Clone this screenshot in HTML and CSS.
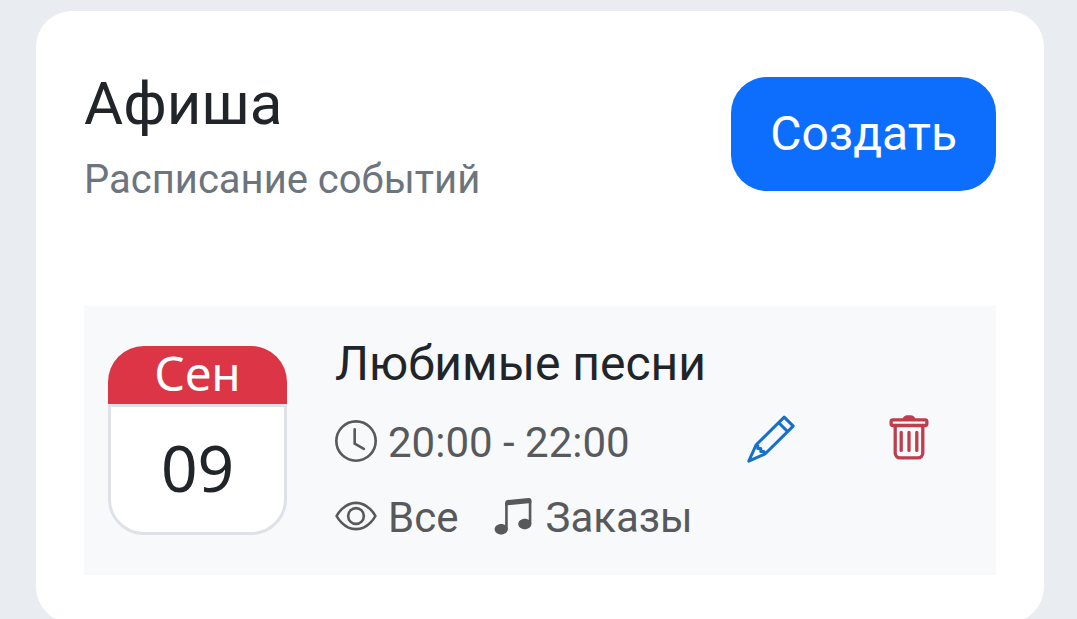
FILE: index.html
```html
<!DOCTYPE html>
<html lang="ru">
<head>
<meta charset="utf-8">
<meta name="viewport" content="width=device-width, initial-scale=1">
<title>Афиша</title>
<link rel="stylesheet" href="styles.css">
</head>
<body>
<main class="card">
  <header class="card-header">
    <div>
      <h1 class="title">Афиша</h1>
      <p class="subtitle">Расписание событий</p>
    </div>
    <button class="create" type="button">Создать</button>
  </header>
  <article class="event">
    <time class="calendar" datetime="09-09">
      <span class="month">Сен</span>
      <span class="day">09</span>
    </time>
    <div class="details">
      <h2 class="name">Любимые песни</h2>
      <div class="meta">
        <span class="item">
          <svg class="icon" viewBox="0 0 16 16" fill="none" stroke="currentColor" aria-hidden="true"><circle cx="8" cy="8" r="7.5"/><path d="M7.5 3.500v5.500l3.500 2" stroke-linecap="round" stroke-linejoin="round"/></svg>
          20:00 - 22:00
        </span>
      </div>
      <div class="meta">
        <span class="item">
          <svg class="icon" viewBox="0 0 16 16" fill="none" stroke="currentColor" aria-hidden="true"><path d="M.6 8S3.200 3 8 3s7.400 5 7.400 5-2.600 5-7.400 5S.6 8 .6 8z" stroke-linejoin="round"/><circle cx="8" cy="8" r="3"/></svg>
          Все
        </span>
        <span class="item">
          <svg class="icon" viewBox="0 0 16 16" fill="currentColor" aria-hidden="true"><path d="M6 13c0 1.105-1.120 2-2.500 2S1 14.105 1 13s1.120-2 2.500-2 2.500.896 2.500 2zm9-2c0 1.105-1.120 2-2.500 2s-2.500-.895-2.500-2 1.120-2 2.500-2 2.500.895 2.500 2z"/><path fill-rule="evenodd" d="M14 11V2h1v9h-1zM6 3v10H5V3h1z"/><path d="M5 2.905a1 1 0 0 1 .9-.995l8-.8a1 1 0 0 1 1.100.995V3L5 4V2.905z"/></svg>
          Заказы
        </span>
      </div>
    </div>
    <div class="actions">
      <button class="action edit" type="button" aria-label="Редактировать">
        <svg class="action-icon" viewBox="0 0 16 16" fill="none" stroke="currentColor" stroke-linejoin="round" aria-hidden="true"><path d="M12.400.7 15.400 3.700 6 13 .6 15.400 3 10z"/><path d="m10.600 2.600 2.900 2.900M3 10l.6.3v.9h1v1h1l.4.8"/></svg>
      </button>
      <button class="action delete" type="button" aria-label="Удалить">
        <svg class="action-icon" viewBox="0 0 16 16" fill="none" stroke="currentColor" stroke-width="1.1" stroke-linejoin="round" stroke-linecap="round" aria-hidden="true"><rect x="2.050" y="1.600" width="11.900" height="1.900" rx=".6"/><path d="M3.400 3.500v9.200a1.600 1.600 0 0 0 1.600 1.600h6a1.600 1.600 0 0 0 1.600-1.600V3.500M5.400 5.800v6M8 5.800v6M10.600 5.800v6"/><path d="M6.400 1.400c.2-.6.500-.8 1-.8h1.200c.5 0 .8.200 1 .8z" fill="currentColor"/></svg>
      </button>
    </div>
  </article>
</main>
</body>
</html>
```
FILE: styles.css
```css
* {
  box-sizing: border-box;
}

body {
  margin: 0;
  padding: 11px 33px 48px 36px;
  background: #e9ecf1;
  color: #212529;
  font-family: Roboto, "Noto Sans", sans-serif;
}

.card {
  padding: 48px;
  border-radius: 36px;
  background: #fff;
}

.card-header {
  display: flex;
  justify-content: space-between;
  align-items: flex-start;
  padding: 8px 0 96px;
}

.title,
.subtitle,
.name {
  margin: 0;
  font-weight: 400;
}

.title {
  font-size: 60px;
  line-height: 74px;
}

.subtitle {
  margin-top: 9px;
  color: #6c757d;
  font-size: 40px;
  line-height: 60px;
}

.create {
  margin-top: 10px;
  padding: 21px 39px;
  border: 0;
  border-radius: 36px;
  background: #0d6efd;
  color: #fff;
  font: inherit;
  font-size: 48px;
  line-height: 72px;
}

.event {
  display: flex;
  align-items: center;
  padding: 19px 24px 20px;
  background: #f7f9fb;
}

.calendar {
  flex: none;
  display: flex;
  flex-direction: column;
  width: 179px;
  margin-right: 48px;
  font-family: "Noto Sans", sans-serif;
  text-align: center;
}

.month {
  padding-bottom: 4px;
  border-radius: 36px 36px 0 0;
  background: #dc3545;
  color: #fff;
  font-size: 48px;
  line-height: 54px;
}

.day {
  padding-bottom: 3px;
  border: 3px solid #dee2e6;
  border-radius: 0 0 36px 36px;
  background: #fff;
  font-size: 64px;
  line-height: 122px;
}

.details {
  padding-top: 4px;
}

.name {
  margin-bottom: 6px;
  font-size: 48px;
  line-height: 70px;
}

.meta {
  display: flex;
  gap: 34px;
  color: #58595c;
  font-size: 42px;
  line-height: 75px;
}

.item {
  display: flex;
  align-items: center;
  gap: 11px;
  white-space: nowrap;
}

.icon {
  width: 42px;
  height: 42px;
  margin-bottom: 3px;
}

.actions {
  display: flex;
  flex: 1;
  justify-content: flex-end;
  gap: 90px;
  padding: 0 39px 3px 0;
}

.action {
  display: flex;
  padding: 0;
  border: 0;
  background: none;
}

.action-icon {
  width: 48px;
  height: 48px;
}

.edit {
  color: #176fcc;
}

.delete {
  color: #bd3f4e;
}
```
